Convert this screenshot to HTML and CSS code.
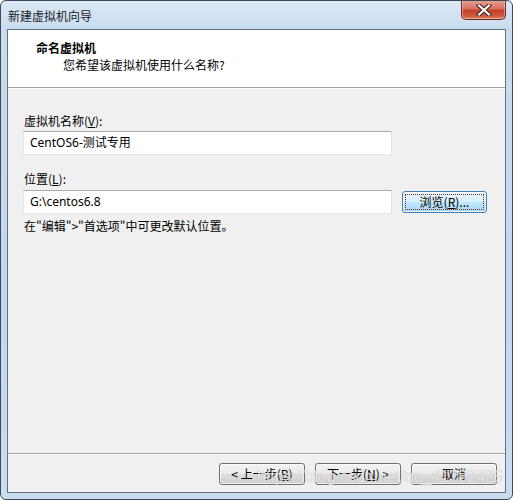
FILE: index.html
```html
<!DOCTYPE html>
<html lang="zh-CN">
<head>
<meta charset="utf-8">
<title>新建虚拟机向导</title>
<link rel="stylesheet" href="styles.css">
</head>
<body>
<div class="window">
  <div class="titlebar">
    <span class="title">新建虚拟机向导</span>
    <button class="close" aria-label="关闭">
      <svg width="16" height="12" viewBox="0 0 16 12">
        <path d="M3 1.5 L13 10.5 M13 1.5 L3 10.5" stroke="#3a2020" stroke-width="4.2" stroke-linecap="square" fill="none"/>
        <path d="M3 1.5 L13 10.5 M13 1.5 L3 10.5" stroke="#ffffff" stroke-width="2.2" stroke-linecap="square" fill="none"/>
      </svg>
    </button>
  </div>
  <div class="client">
    <div class="header">
      <div class="h-title">命名虚拟机</div>
      <div class="h-sub">您希望该虚拟机使用什么名称?</div>
    </div>
    <div class="body">
      <div class="label">虚拟机名称(<u>V</u>):</div>
      <div class="row row1">
        <div class="input">CentOS6-测试专用</div>
      </div>
      <div class="label label2">位置(<u>L</u>):</div>
      <div class="row row2">
        <div class="input">G:\centos6.8</div>
        <button class="btn btn-focus"><span class="focus">浏览(<u>R</u>)...</span></button>
      </div>
      <div class="hint">在"编辑"&gt;"首选项"中可更改默认位置。</div>
    </div>
    <div class="footer">
      <button class="btn">&lt; 上一步(<u>B</u>)</button>
      <button class="btn">下一步(<u>N</u>) &gt;</button>
      <button class="btn">取消</button>
    </div>
  </div>
  <div class="watermark">https://blog.csdn.net/qq_41782425</div>
</div>
</body>
</html>
```
FILE: styles.css
```css
* { box-sizing: border-box; }
html, body { margin: 0; padding: 0; background: #ffffff; }
body {
  font-family: "Noto Sans CJK SC", "Noto Sans", sans-serif;
  font-size: 12px;
  color: #000;
}
.window {
  position: relative;
  width: 513px;
  height: 500px;
  border: 1px solid #3d4a58;
  border-radius: 6px;
  padding: 0 6px 6px 6px;
  display: flex;
  flex-direction: column;
  background: linear-gradient(180deg, #dce9f6 0px, #c9dcf0 28px, #c2d8ef 60%, #c9ddf2 100%);
  overflow: hidden;
}
.titlebar {
  height: 28px;
  display: flex;
  align-items: flex-start;
  justify-content: space-between;
  padding-left: 1px;
}
.title {
  margin-top: 7px;
  line-height: 16px;
  color: #1b1b1b;
}
.close {
  margin-top: -1px;
  width: 45px;
  height: 20px;
  border: 1px solid #6a2a22;
  border-top: none;
  border-radius: 0 0 5px 5px;
  background: linear-gradient(180deg, #e8a395 0%, #d9735f 45%, #c4412a 55%, #d05a3f 85%, #e08a6c 100%);
  display: flex;
  align-items: center;
  justify-content: center;
  padding: 0;
  box-shadow: inset 0 0 0 1px rgba(255,255,255,0.35);
}
.client {
  flex: 1;
  border: 1px solid #66707c;
  background: #f0f0f0;
  display: flex;
  flex-direction: column;
}
.header {
  height: 58px;
  background: #ffffff;
  border-bottom: 1px solid #a0a0a0;
  padding: 3px 0 0 28px;
}
.h-title {
  font-weight: bold;
  line-height: 22px;
  margin-top: 4px;
}
.h-sub {
  padding-left: 27px;
  line-height: 16px;
  margin-top: -2px;
}
.body {
  flex: 1;
  border-top: 1px solid #ffffff;
  padding: 24px 0 0 16px;
}
.label { line-height: 16px; }
.label2 { margin-top: 16px; }
.row {
  display: flex;
  align-items: flex-start;
}
.row1 { margin-top: 2px; }
.row2 { margin-top: 3px; }
.input {
  width: 369px;
  height: 24px;
  margin-left: -1px;
  background: #ffffff;
  border: 1px solid #e3e9ef;
  border-top-color: #abadb3;
  border-left-color: #e2e3ea;
  border-right-color: #dbdfe6;
  padding: 0 6px;
  line-height: 22px;
  font-family: "Noto Sans", "Noto Sans CJK SC", sans-serif;
  font-size: 12px;
}
.btn {
  width: 85px;
  height: 22px;
  border: 1px solid #707070;
  border-radius: 3px;
  background: linear-gradient(180deg, #f2f2f2 0%, #ebebeb 48%, #dddddd 52%, #cfcfcf 100%);
  box-shadow: inset 0 0 0 1px rgba(255,255,255,0.7);
  font-family: "Noto Sans CJK SC", "Noto Sans", sans-serif;
  font-size: 12px;
  color: #000;
  padding: 0;
  line-height: 18px;
}
.btn-focus {
  margin-left: 10px;
  margin-top: 1px;
  width: 85px;
  height: 22px;
  border-color: #3c7fb1;
  background: linear-gradient(180deg, #eaf6fd 0%, #d9f0fc 48%, #bee6fd 52%, #a7d9f5 100%);
  padding: 2px;
}
.focus {
  display: block;
  height: 16px;
  line-height: 14px;
  border: 1px dotted #7a2a1a;
}
.hint {
  margin-top: 4px;
  line-height: 16px;
}
.footer {
  height: 39px;
  border-top: 1px solid #a0a0a0;
  box-shadow: inset 0 1px 0 #ffffff;
  display: flex;
  justify-content: flex-end;
  gap: 10px;
  padding: 9px 8px 0 0;
}
.footer .btn { width: 86px; }
.watermark {
  position: absolute;
  left: 256px;
  top: 467px;
  font-family: "Liberation Sans", sans-serif;
  font-size: 16px;
  color: rgba(255,255,255,0.7);
  text-shadow: 0 0 1px rgba(120,120,120,0.5);
  pointer-events: none;
}
```
